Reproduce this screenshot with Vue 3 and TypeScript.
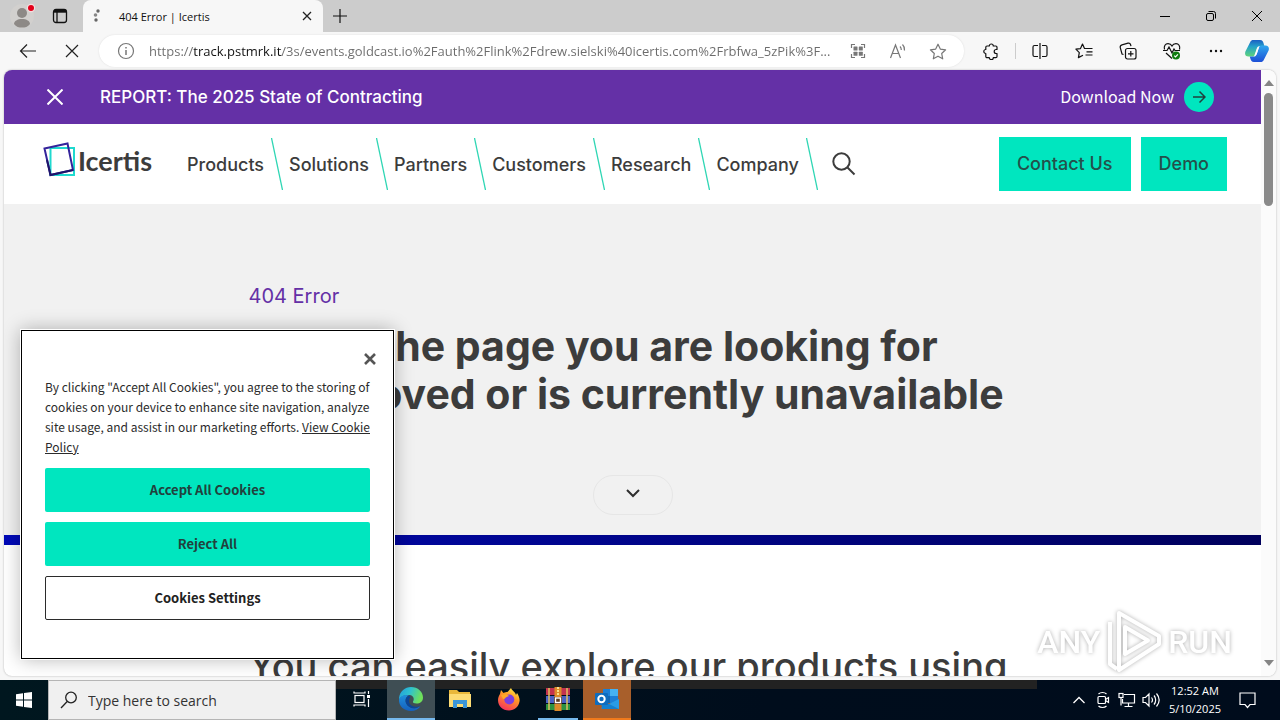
<script setup lang="ts">
import { ref } from 'vue'

const url = ref('https://track.pstmrk.it/3s/events.goldcast.io%2Fauth%2Flink%2Fdrew.sielski%40icertis.com%2Frbfwa_5zPik%3F...')
const query = ref('')
const navItems: string[] = ['Products', 'Solutions', 'Partners', 'Customers', 'Research', 'Company']
</script>

<template>
  <div class="desktop">
    <div class="browser">
      <div class="tabstrip">
        <div class="tab-tools">
          <button class="ico" aria-label="Profile">
            <svg width="28" height="28" viewBox="0 0 28 28">
              <circle cx="14" cy="14" r="12" fill="#d2d0ce" />
              <circle cx="14" cy="11" r="5" fill="#8d8986" />
              <path d="M6 22c0-3 3.500-5 8-5s8 2 8 5c-2 3-5 3.500-8 3.500S8 25 6 22z" fill="#8d8986" />
              <circle cx="23" cy="6" r="4.200" fill="#f3dede" />
              <circle cx="23" cy="6" r="3" fill="#e3001b" />
            </svg>
          </button>
          <button class="ico" aria-label="Tab actions">
            <svg width="16" height="16" viewBox="0 0 16 16" fill="none" stroke="#111" stroke-width="1.300">
              <rect x="1.500" y="1.500" width="13" height="13" rx="2.500" />
              <path d="M2 3.200h12" stroke-width="3" />
              <path d="M5 4v10" />
            </svg>
          </button>
        </div>
        <div class="tab">
          <svg width="16" height="16" viewBox="0 0 16 16" fill="#666">
            <circle cx="9" cy="3" r="1.700" /><circle cx="6.500" cy="7" r="1.800" fill="#888" /><circle cx="7" cy="12" r="1.700" />
          </svg>
          <span class="tab-title">404 Error | Icertis</span>
          <button class="ico" aria-label="Close tab">
            <svg width="10" height="10" viewBox="0 0 10 10" stroke="#222" stroke-width="1.300"><path d="M1 1l8 8M9 1l-8 8" /></svg>
          </button>
        </div>
        <button class="ico newtab" aria-label="New tab">
          <svg width="14" height="14" viewBox="0 0 14 14" stroke="#111" stroke-width="1.200"><path d="M7 0v14M0 7h14" /></svg>
        </button>
        <div class="winctl">
          <button class="ico" aria-label="Minimize"><svg width="10" height="10" viewBox="0 0 10 10" stroke="#000"><path d="M0 5.500h10" /></svg></button>
          <button class="ico" aria-label="Restore">
            <svg width="10" height="10" viewBox="0 0 10 10" fill="none" stroke="#000"><rect x=".500" y="2.500" width="7" height="7" rx="1.500" /><path d="M2.500 .500h5a2 2 0 0 1 2 2v5" /></svg>
          </button>
          <button class="ico" aria-label="Close"><svg width="10" height="10" viewBox="0 0 10 10" stroke="#000"><path d="M0 0l10 10M10 0L0 10" /></svg></button>
        </div>
      </div>

      <div class="toolbar">
        <button class="ico tool" aria-label="Back">
          <svg width="18" height="16" viewBox="0 0 18 16" fill="none" stroke="#222" stroke-width="1.200"><path d="M17 8H1.500M8 1.500L1.500 8 8 14.500" /></svg>
        </button>
        <button class="ico tool" aria-label="Stop loading">
          <svg width="14" height="14" viewBox="0 0 14 14" stroke="#222" stroke-width="1.200"><path d="M1 1l12 12M13 1L1 13" /></svg>
        </button>
        <div class="address">
          <button class="ico" aria-label="Site information">
            <svg width="18" height="18" viewBox="0 0 18 18" fill="none" stroke="#777" stroke-width="1.200"><circle cx="9" cy="9" r="7.500" /><path d="M9 8v5M9 5v1.500" stroke-width="1.500" /></svg>
          </button>
          <input v-model="url" class="url" type="text" aria-label="Address" spellcheck="false" />
          <button class="ico aico" aria-label="QR code">
            <svg width="16" height="16" viewBox="0 0 16 16" fill="none" stroke="#777" stroke-width="1.200">
              <path d="M1.500 5v-3.500H5M11 1.500h3.500V5M14.500 11v3.500H11M5 14.500H1.500V11" />
              <g fill="#777" stroke="none"><rect x="3.500" y="3.500" width="4" height="4" rx=".5" /><rect x="8.800" y="3.500" width="4" height="4" rx=".5" /><rect x="3.500" y="8.800" width="4" height="4" rx=".5" /><rect x="8.800" y="8.800" width="4" height="4" rx=".5" /></g>
            </svg>
          </button>
          <button class="ico aico" aria-label="Read aloud">
            <svg width="18" height="16" viewBox="0 0 18 16" fill="none" stroke="#777" stroke-width="1.200">
              <path d="M1.500 15L6.500 2l5 13M3.200 10.500h6.600M11 3.500c1 1 1.300 2 1.300 3.500M13.500 1.500c1.800 1.800 2.300 3.500 2 6" />
            </svg>
          </button>
          <button class="ico aico" aria-label="Add to favorites">
            <svg width="18" height="17" viewBox="0 0 18 17" fill="none" stroke="#777" stroke-width="1.200"><path d="M9 1.200l2.300 4.900 5.300.700-3.900 3.700 1 5.300L9 13.200l-4.700 2.600 1-5.300L1.400 6.800l5.300-.700z" stroke-linejoin="round" /></svg>
          </button>
        </div>
        <div class="tools">
          <button class="ico tool" aria-label="Extensions">
            <svg width="16" height="17" viewBox="0 0 16 17" fill="none" stroke="#111" stroke-width="1.200" stroke-linejoin="round">
              <path d="M4 3h2.300a2 2 0 0 1 4 0h2.500a1.200 1.200 0 0 1 1.200 1.200v2.300h-.800a2 2 0 0 0 0 4h.800v3a1.200 1.200 0 0 1-1.200 1.200H10.300a2 2 0 0 1-4 0H4a1.200 1.200 0 0 1-1.200-1.200v-3a2 2 0 0 1 0-4V4.200A1.200 1.200 0 0 1 4 3z" />
            </svg>
          </button>
          <span class="divider"></span>
          <button class="ico tool" aria-label="Split screen">
            <svg width="16" height="16" viewBox="0 0 16 16" fill="none" stroke="#111" stroke-width="1.200"><path d="M6 2.500H2.500a1.500 1.500 0 0 0-1.500 1.500v8a1.500 1.500 0 0 0 1.500 1.500H6M10 2.500h3.500a1.500 1.500 0 0 1 1.500 1.500v8a1.500 1.500 0 0 1-1.500 1.500H10M8 0v16" /></svg>
          </button>
          <button class="ico tool" aria-label="Favorites">
            <svg width="18" height="16" viewBox="0 0 18 16" fill="none" stroke="#111" stroke-width="1.200" stroke-linejoin="round"><path d="M11.500 5.500H9.500L7.500 1 5.500 5.600.900 6.200l3.400 3.400-.900 5L8 12.200M10.500 5.500h7M11.500 8.800h6M10.500 12h7" /></svg>
          </button>
          <button class="ico tool" aria-label="Collections">
            <svg width="18" height="18" viewBox="0 0 18 18" fill="none" stroke="#111" stroke-width="1.200"><rect x="6.500" y="6.500" width="10.500" height="10.500" rx="2" /><path d="M11.800 9v5.500M9 11.800h5.500M4.500 12.500L3 12 1.200 5.500C1 4 1.500 3.200 3 2.800l6-1.600c1.400-.300 2.200.200 2.500 1.300l.500 1.700" /></svg>
          </button>
          <button class="ico tool" aria-label="Browser essentials">
            <svg width="18" height="18" viewBox="0 0 18 18" fill="none" stroke="#111" stroke-width="1.200">
              <path d="M1.500 7.500C.500 4 2.500 1.600 5 1.600c2 0 3.300 1 4 2.400.700-1.400 2-2.400 4-2.400 2.500 0 4.500 2.400 3.500 5.900M0 8.500h4l2-3.500 3 6 2-4 1 1.500h5M3 11l6 5.500" />
              <circle cx="13" cy="13.500" r="4" fill="#107c10" stroke="none" /><path d="M11.200 13.600l1.300 1.300 2.400-2.600" stroke="#fff" />
            </svg>
          </button>
          <button class="ico tool" aria-label="Settings and more">
            <svg width="16" height="4" viewBox="0 0 16 4" fill="#111"><circle cx="3" cy="2" r="1.200" /><circle cx="8" cy="2" r="1.200" /><circle cx="13" cy="2" r="1.200" /></svg>
          </button>
          <button class="ico copilot" aria-label="Copilot">
            <svg width="24" height="24" viewBox="0 0 24 24">
              <defs>
                <linearGradient id="cpA" x1="0" y1="0" x2="0" y2="1"><stop offset="0" stop-color="#1b5fc4" /><stop offset=".4" stop-color="#25a2c9" /><stop offset="1" stop-color="#5fd47a" /></linearGradient>
                <linearGradient id="cpB" x1="0" y1="0" x2="0" y2="1"><stop offset="0" stop-color="#2fa7ee" /><stop offset="1" stop-color="#1d4fd6" /></linearGradient>
              </defs>
              <path d="M5 3.500C5.800 1.500 7 1 8.500 1H15c2.500 0 3 1.500 3.500 3l.8 3H15c-2 0-2.700 1-3.200 2.600L9.500 16c-.400 1.200-1.200 1.500-2.500 1.500H3.500C.500 17.500-.500 15.500.400 12.500z" fill="url(#cpA)" />
              <path d="M19 20.500c-.800 2-2 2.500-3.500 2.500H9c-2.500 0-3-1.500-3.500-3l-.8-2.500H8.500c2 0 2.700-1 3.200-2.600L14 8.500c.400-1.200 1.200-2 2.500-2h4c3 0 4 2.500 3.100 5z" fill="url(#cpB)" />
              <path d="M10 16l2-6.500c.4-1 1-1.500 2-1.500L12 14.500c-.400 1.200-1 1.500-2 1.500z" fill="#fff" />
            </svg>
          </button>
        </div>
      </div>

      <div class="frame">
        <div class="page">
          <div class="promo">
            <button class="ico" aria-label="Dismiss announcement">
              <svg width="16" height="16" viewBox="0 0 16 16" stroke="#fff" stroke-width="2"><path d="M.500 .500l15 15M15.500 .500l-15 15" /></svg>
            </button>
            <span class="promo-title">REPORT: The 2025 State of Contracting</span>
            <a class="download" href="#">
              <span class="download-text">Download Now</span>
              <span class="circle"><svg width="14" height="14" viewBox="0 0 14 14" fill="none" stroke="#21413d" stroke-width="1.500"><path d="M1 7h12M7.500 1.500L13 7l-5.500 5.500" /></svg></span>
            </a>
          </div>

          <header class="site-header">
            <a class="logo" href="#" aria-label="Icertis home">
              <svg width="33" height="36" viewBox="0 0 33 36" fill="none">
                <rect x="7.500" y="6" width="23.500" height="27" stroke="#1fd9cf" stroke-width="2" />
                <path d="M1.500 6.500L24.500 1.500 30 28 7.500 33z" stroke="#34249b" stroke-width="2" />
                <path d="M4 18l3.500 15L30 28" stroke="#1d1469" stroke-width="2" />
              </svg>
              <span>Icertis</span>
            </a>
            <nav class="nav">
              <template v-for="item in navItems" :key="item">
                <a href="#">{{ item }}</a>
                <svg class="slash" width="12" height="52" viewBox="0 0 12 52" stroke="#2fd6b4" stroke-width="1.300"><path d="M.500 0l11 52" /></svg>
              </template>
              <button class="ico" aria-label="Search">
                <svg width="24" height="24" viewBox="0 0 24 24" fill="none" stroke="#3c3c3c" stroke-width="2"><circle cx="9.500" cy="9.500" r="8.200" /><path d="M15.500 15.500l7 7" /></svg>
              </button>
            </nav>
            <div class="cta">
              <a href="#">Contact Us</a>
              <a href="#">Demo</a>
            </div>
          </header>

          <main>
            <section class="hero">
              <p class="eyebrow">404 Error</p>
              <h1><span>Sorry, the page you are looking for</span><span>was moved or is currently unavailable</span></h1>
              <button class="pill" aria-label="Scroll down">
                <svg width="14" height="9" viewBox="0 0 14 9" fill="none" stroke="#2f2f2f" stroke-width="2"><path d="M1 1l6 6 6-6" /></svg>
              </button>
            </section>
            <section class="explore">
              <h2>You can easily explore our products using</h2>
            </section>
          </main>
        </div>

        <div class="scrollbar" aria-hidden="true">
          <svg width="10" height="6" viewBox="0 0 10 6" fill="#858585"><path d="M5 0l5 6H0z" /></svg>
          <div class="track"><div class="thumb"></div></div>
          <svg width="10" height="6" viewBox="0 0 10 6" fill="#858585"><path d="M0 0h10L5 6z" /></svg>
        </div>

        <div class="cookies" role="dialog" aria-label="Cookie consent">
          <button class="ico cookie-x" aria-label="Close dialog">
            <svg width="12" height="12" viewBox="0 0 12 12" stroke="#555" stroke-width="2.600"><path d="M1 1l10 10M11 1L1 11" /></svg>
          </button>
          <p>By clicking "Accept All Cookies", you agree to the storing of cookies on your device to enhance site navigation, analyze site usage, and assist in our marketing efforts. <a href="#">View Cookie Policy</a></p>
          <button class="cbtn">Accept All Cookies</button>
          <button class="cbtn">Reject All</button>
          <button class="cbtn outline">Cookies Settings</button>
        </div>
      </div>
    </div>

    <div class="watermark" aria-hidden="true">
      <span>ANY</span>
      <svg width="58" height="64" viewBox="0 0 58 64" fill="none" stroke="#fff" stroke-width="4" stroke-linejoin="round">
        <path d="M14 3l40 23v8L14 60z" /><path d="M20 17l23 13.500L20 44z" /><path d="M5 12v42l7 5" />
      </svg>
      <span>RUN</span>
    </div>

    <div class="taskbar">
      <button class="ico start" aria-label="Start">
        <svg width="16" height="16" viewBox="0 0 16 16" fill="#fff"><path d="M0 2.200L7 1.200V7.500H0zM8 1.100L16 0V7.500H8zM0 8.500h7v6.300L0 13.800zM8 8.500h8V16l-8-1.100z" /></svg>
      </button>
      <label class="search">
        <svg width="18" height="18" viewBox="0 0 18 18" fill="none" stroke="#222" stroke-width="1.300"><circle cx="11" cy="6.500" r="5.300" /><path d="M7.200 10.500L1 17" /></svg>
        <input v-model="query" type="text" placeholder="Type here to search" aria-label="Type here to search" />
      </label>
      <div class="apps">
        <button class="ico app" aria-label="Task View">
          <svg width="18" height="16" viewBox="0 0 18 16" fill="none" stroke="#fff" stroke-width="1.200"><rect x="2" y="4.500" width="9" height="7" /><path d="M1 .500v1.500h11V.500M1 15.500V14h11v1.500M15.500 0v3M15.500 8v8" /><path d="M14 4h3v3h-3z" fill="#fff" stroke="none" /></svg>
        </button>
        <button class="ico app active" aria-label="Microsoft Edge">
          <svg width="26" height="26" viewBox="0 0 26 26">
            <defs>
              <linearGradient id="edA" x1="0" y1="0" x2="1" y2=".3"><stop offset="0" stop-color="#219ddd" /><stop offset=".5" stop-color="#2fc2cf" /><stop offset="1" stop-color="#6fe05a" /></linearGradient>
              <linearGradient id="edB" x1="0" y1="0" x2="0" y2="1"><stop offset="0" stop-color="#1f8fdc" /><stop offset="1" stop-color="#1560bd" /></linearGradient>
            </defs>
            <path d="M1 12C2 5 7 1 13 1c7 0 12 5 12 10.500 0 4-3 6-6.500 6-2.500 0-4-1-3.500-2 1.500-2 1-6-3.500-6.500C7 8.500 2.500 10 1 14z" fill="url(#edA)" />
            <path d="M1 13.500C2.500 9.500 7 8 11 9.500c-3 1-4 4-3 7.500 1.500 4 6 6 10 5 2-.500 3.500-1.500 4.500-2C20.500 23.500 17 25 13 25 6 25 .500 20 1 13.500z" fill="url(#edB)" />
            <path d="M11 9.500c-3.500 1.500-4 5-3 7.500 1.500 4 6 6 10 5 2-.500 3.500-1.500 4.500-2-5 2-11 0-11.500-4.500-.200-2 .500-3.500 1.500-4.500z" fill="#0c4596" />
          </svg>
        </button>
        <button class="ico app" aria-label="File Explorer">
          <svg width="22" height="20" viewBox="0 0 22 20"><path d="M0 1h8l2 2h11v15H0z" fill="#e9b83b" /><path d="M0 5h22v13H0z" fill="#fddc74" /><path d="M4 11h14v8h-4v-4H8v4H4z" fill="#3c96d8" /></svg>
        </button>
        <button class="ico app" aria-label="Firefox">
          <svg width="24" height="24" viewBox="0 0 24 24">
            <defs><linearGradient id="ffA" x1=".8" y1="0" x2=".3" y2="1"><stop offset="0" stop-color="#fff04a" /><stop offset=".4" stop-color="#ff9a25" /><stop offset="1" stop-color="#f5305e" /></linearGradient></defs>
            <path d="M3 7l1-4 2.500 3c1.500-1 3-1 4-1L14 1c1 3 4 3.500 5 7l1-2c2 3 3 6 2.500 8.500C21.500 20 17.500 23.500 12 23.500 5.500 23.500 1 19 1 13c0-2.500 1-4.500 2-6z" fill="url(#ffA)" />
            <circle cx="12.300" cy="12.500" r="5" fill="#7a3ee0" /><path d="M4 8c3-1.500 6-1 8 1-2 .500-3 1-4 2.500L6 12z" fill="#ffa928" />
          </svg>
        </button>
        <button class="ico app running" aria-label="WinRAR">
          <svg width="24" height="24" viewBox="0 0 24 24">
            <rect y="1" width="24" height="7" fill="#c2334f" /><rect y="9" width="24" height="7" fill="#4a62c4" /><rect y="17" width="24" height="6" fill="#2c9240" />
            <path d="M3 1v22M21 1v22" stroke="#e0c060" stroke-width="1.500" /><rect x="8.500" y="0" width="7" height="24" fill="#dc8a2a" /><path d="M12 0v9" stroke="#f9e08a" stroke-width="2" stroke-dasharray="2 1" />
            <rect x="8" y="10" width="8" height="7" fill="#5b3b20" /><rect x="9.500" y="11" width="5" height="4.500" fill="none" stroke="#fff" stroke-width="1.400" />
          </svg>
        </button>
        <button class="ico app alert" aria-label="Outlook">
          <svg width="26" height="22" viewBox="0 0 26 22">
            <rect x="9" y="1" width="15" height="14" fill="#1c7fd6" /><path d="M16 1h8v7h-8z" fill="#46b3f2" /><path d="M9 8h7v7H9z" fill="#1267b4" /><path d="M7 20l18-9v10H9z" fill="#2a9ce6" /><path d="M7 12l18 9H8z" fill="#1580cf" />
            <rect x="1" y="5" width="13" height="12" rx="1" fill="#0f6cbd" /><circle cx="7.500" cy="11" r="3.200" fill="none" stroke="#fff" stroke-width="2" />
          </svg>
        </button>
      </div>
      <div class="tray">
        <button class="ico" aria-label="Show hidden icons"><svg width="12" height="8" viewBox="0 0 12 8" fill="none" stroke="#fff" stroke-width="1.300"><path d="M.500 7L6 1.500 11.500 7" /></svg></button>
        <button class="ico" aria-label="Meet Now"><svg width="14" height="18" viewBox="0 0 14 18" fill="none" stroke="#fff" stroke-width="1.200"><rect x="2" y="5.500" width="7.500" height="7" rx="1" /><path d="M9.500 8.500l3-2v5l-3-2M2.500 3c2-2 6-2 8 0M2.500 15c2 2 6 2 8 0" /></svg></button>
        <button class="ico" aria-label="Network"><svg width="18" height="16" viewBox="0 0 18 16" fill="none" stroke="#fff" stroke-width="1.200"><path d="M6 2.500h10.500v8.500H4.500V7M10.500 11v3M6.500 14.500h8" /><rect x="1" y="1.500" width="4" height="4" /><path d="M3 5.500v8" /></svg></button>
        <button class="ico" aria-label="Volume"><svg width="18" height="16" viewBox="0 0 18 16" fill="none" stroke="#fff" stroke-width="1.200"><path d="M1 5.500h2.500L7 2v12l-3.500-3.500H1zM9.500 5.500c1.200 1.500 1.200 3.500 0 5M12 3.500c2.200 2.500 2.200 6.500 0 9M14.500 1.500c3.300 4 3.300 9 0 13" /></svg></button>
        <div class="clock"><span>12:52 AM</span><span>5/10/2025</span></div>
        <button class="ico" aria-label="Notifications"><svg width="17" height="17" viewBox="0 0 17 17" fill="none" stroke="#fff" stroke-width="1.200"><path d="M1 1h15v11.500h-5L8.500 15.500 6 12.500H1z" /></svg></button>
      </div>
    </div>
  </div>
</template>

<style>
html,
body,
#app {
  height: 100%;
  margin: 0;
}
</style>

<style scoped>
* {
  box-sizing: border-box;
}
.desktop {
  position: relative;
  display: flex;
  flex-direction: column;
  height: 100vh;
  overflow: hidden;
  font-family: "Open Sans", "Noto Sans", sans-serif;
}
button,
input {
  font: inherit;
  border: 0;
  padding: 0;
  margin: 0;
  background: none;
}
input:focus {
  outline: none;
}
a {
  color: inherit;
  text-decoration: none;
}
svg {
  display: block;
  flex: none;
}
.ico {
  display: flex;
  align-items: center;
  justify-content: center;
  flex: none;
}
.browser {
  flex: 1;
  min-height: 0;
  display: flex;
  flex-direction: column;
  background: #f7f7f7;
}
.tabstrip {
  display: flex;
  height: 32px;
  background: #ccc;
}
.tab-tools {
  display: flex;
  align-items: center;
  gap: 16px;
  width: 83px;
  padding-left: 8px;
}
.tab {
  display: flex;
  align-items: center;
  width: 240px;
  padding: 0 11px 0 6px;
  background: #f7f7f7;
  border-radius: 8px 8px 0 0;
}
.tab-title {
  flex: 1;
  padding-left: 14px;
  font-size: 11px;
  color: #111;
}
.newtab {
  width: 34px;
}
.winctl {
  display: flex;
  margin-left: auto;
}
.winctl .ico {
  width: 46px;
}
.toolbar {
  display: flex;
  align-items: center;
  height: 38px;
  padding: 0 4px 0 6px;
}
.tool {
  width: 44px;
  height: 32px;
}
.address {
  flex: 1;
  min-width: 0;
  display: flex;
  align-items: center;
  height: 32px;
  margin: 0 5px;
  padding: 0 6px 0 18px;
  border-radius: 16px;
  background: #fff;
  box-shadow: 0 0 2px #ddd;
}
.url {
  flex: 1;
  min-width: 0;
  margin: 0 6px 0 14px;
  height: 24px;
  font-size: 13px;
  color: transparent;
  background: linear-gradient(90deg, #6b6b6b 44px, #111 44px, #111 133px, #6b6b6b 133px);
  background-clip: text;
  -webkit-background-clip: text;
}
.aico {
  width: 40px;
}
.tools {
  display: flex;
  align-items: center;
}
.divider {
  width: 1px;
  height: 16px;
  margin: 0 2px;
  background: #ccc;
}
.copilot {
  width: 38px;
}
.frame {
  position: relative;
  flex: 1;
  min-height: 0;
  display: flex;
  margin: 0 4px 4px;
  border-radius: 8px;
  overflow: hidden;
  background: #fff;
  box-shadow: 0 0 2px #aaa;
}
.page {
  flex: 1;
  min-width: 0;
  overflow: hidden;
  color: #3c3c3c;
  font-family: Inter, "Liberation Sans", sans-serif;
  font-weight: 500;
}
.promo {
  display: flex;
  align-items: center;
  height: 54px;
  padding: 0 47px 0 43px;
  background: #6430a6;
  color: #fff;
}
.promo-title {
  margin-left: 37px;
  font-size: 17px;
}
.download {
  display: flex;
  align-items: center;
  gap: 10px;
  margin-left: auto;
  font-family: "Noto Sans CJK SC", sans-serif;
  font-size: 16px;
  font-weight: 400;
}
.download-text {
  padding-bottom: 3px;
}
.circle {
  display: grid;
  place-items: center;
  width: 30px;
  height: 30px;
  border-radius: 50%;
  background: #00e6bf;
}
.site-header {
  display: flex;
  align-items: center;
  height: 80px;
  padding: 0 34px 0 39px;
  background: #fff;
}
.logo {
  display: flex;
  align-items: center;
  gap: 2px;
  font-family: Lato, sans-serif;
  font-size: 27px;
  font-weight: 700;
  width: 144px;
  padding-bottom: 8px;
}
.logo span {
  line-height: 32px;
  padding-top: 2px;
}
.nav {
  display: flex;
  align-items: center;
  gap: 6px;
  font-size: 18px;
}
.slash {
  margin-left: 1px;
}
.nav .ico {
  margin-left: 8px;
}
.cta {
  display: flex;
  gap: 10px;
  margin-left: auto;
}
.cta a {
  padding: 0 18px;
  line-height: 54px;
  font-size: 18px;
  background: #00e6bf;
  color: #24504b;
}
.hero {
  display: flex;
  flex-direction: column;
  height: 341px;
  padding: 80px max(24px, calc(50% - 384px)) 0;
  background: #f1f1f1;
  border-bottom: 10px solid;
  border-image: linear-gradient(90deg, #0009b8, #00005c) 1;
}
.eyebrow {
  margin: 0;
  font-size: 20px;
  line-height: 24px;
  font-weight: 400;
  color: #6430a6;
}
h1 {
  margin: 14px 0 0;
  font-size: 41px;
  line-height: 48px;
  font-weight: 700;
}
h1 span {
  display: block;
  white-space: nowrap;
}
.pill {
  display: grid;
  place-items: center;
  width: 80px;
  height: 40px;
  margin: 57px auto 0;
  padding-bottom: 3px;
  border: 1px solid #e6e6e6;
  border-radius: 20px;
}
.explore {
  padding: 97px max(24px, calc(50% - 384px)) 0;
}
h2 {
  margin: 0;
  font-size: 38px;
  line-height: 48px;
  font-weight: 500;
  white-space: nowrap;
}
.scrollbar {
  display: flex;
  flex-direction: column;
  align-items: center;
  width: 15px;
  padding: 10px 0;
  background: #fbfbfb;
}
.track {
  flex: 1;
  padding-top: 7px;
}
.thumb {
  width: 9px;
  height: 20%;
  border-radius: 5px;
  background: #8a8a8a;
}
.cookies {
  position: absolute;
  left: 17px;
  bottom: 17px;
  display: flex;
  flex-direction: column;
  width: 373px;
  height: 329px;
  padding: 22px 23px 0;
  border: 1px solid #000;
  outline: 1px solid #fff;
  background: #fff;
  color: #2b2b2b;
  font-family: "Noto Sans CJK SC", sans-serif;
  box-shadow: 0 0 18px rgba(0, 0, 0, 0.3);
}
.cookie-x {
  align-self: flex-end;
  margin-right: -6px;
  width: 12px;
  height: 12px;
}
.cookies p {
  margin: 12px -4px 11px 0;
  font-size: 12px;
  line-height: 20px;
}
.cookies p a {
  text-decoration: underline;
}
.cbtn {
  height: 44px;
  margin-bottom: 10px;
  padding-bottom: 2px;
  border-radius: 2px;
  background: #00e6bf;
  color: #21413d;
  font-size: 13px;
  font-weight: 700;
}
.outline {
  border: 1px solid #2b2b2b;
  background: #fff;
  color: #222;
}
.watermark {
  position: absolute;
  right: 48px;
  bottom: 46px;
  display: flex;
  align-items: center;
  gap: 5px;
  color: #fff;
  font-family: Roboto, sans-serif;
  font-size: 32px;
  font-weight: 500;
  filter: drop-shadow(0 0 2px rgba(0, 0, 0, 0.32));
}
.taskbar {
  display: flex;
  height: 40px;
  background: linear-gradient(90deg, #00171f, #000d1c 60%, #000c1c);
}
.start {
  width: 48px;
}
.search {
  display: flex;
  align-items: center;
  gap: 10px;
  width: 288px;
  padding: 0 11px;
  background: #f0f0f0;
  border: 1px solid #b5b5b5;
}
.search input {
  flex: 1;
  min-width: 0;
  font-size: 14px;
}
.search input::placeholder {
  color: #333;
  opacity: 1;
}
.apps {
  flex: 1;
  display: flex;
  gap: 1px;
  max-width: 701px;
  padding-left: 2px;
  background: linear-gradient(#222 9px, transparent 9px);
}
.app {
  width: 48px;
  border-bottom: 2px solid transparent;
}
.app.active {
  background: #3f4e54;
  border-color: #76b9ed;
}
.app.running {
  background: linear-gradient(#76b9ed, #76b9ed) center bottom / 40px 2px no-repeat border-box;
}
.app.alert {
  background: #a85f2b;
  border-color: #f07a1c;
}
.tray {
  display: flex;
  align-items: center;
  margin-left: auto;
  padding-right: 21px;
  color: #fff;
}
.tray .ico {
  width: 24px;
}
.clock {
  display: flex;
  flex-direction: column;
  align-items: center;
  margin: 0 14px 0 6px;
  font-size: 11px;
  line-height: 18px;
}
</style>
